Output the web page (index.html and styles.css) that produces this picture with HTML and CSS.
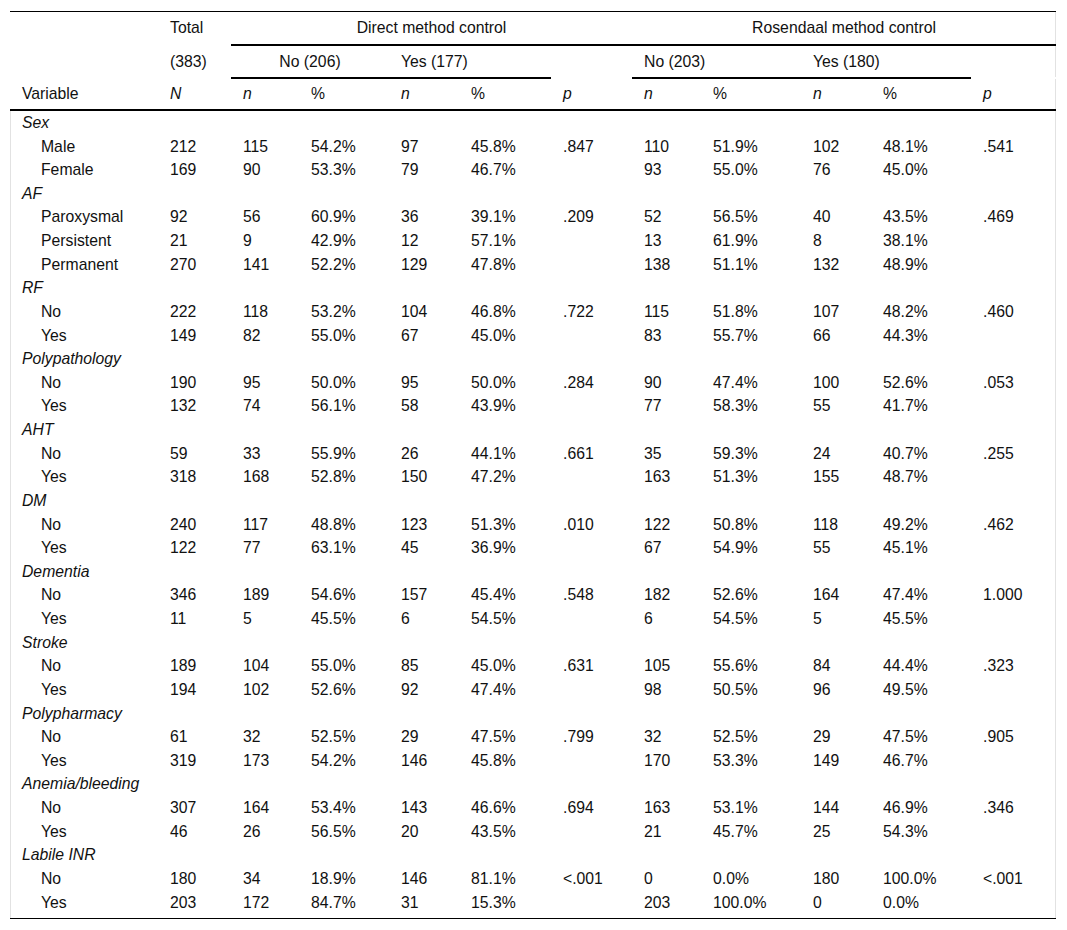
FILE: index.html
```html
<!DOCTYPE html>
<html lang="en">
<head>
<meta charset="utf-8">
<title>Table</title>
<link rel="stylesheet" href="styles.css">
</head>
<body>
<div class="wrap">
<table class="data">
<colgroup>
<col style="width:148px"><col style="width:73px"><col style="width:68px"><col style="width:90px"><col style="width:70px"><col style="width:92px"><col style="width:81px"><col style="width:69px"><col style="width:100px"><col style="width:70px"><col style="width:100px"><col style="width:85px">
</colgroup>
<thead>
<tr class="h1">
<th></th><th>Total</th><th colspan="5" class="center rule">Direct method control</th><th colspan="5" class="center rule last">Rosendaal method control</th>
</tr>
<tr class="h2">
<th></th><th>(383)</th><th colspan="2" class="center rule">No (206)</th><th colspan="2" class="rule">Yes (177)</th><th></th><th colspan="2" class="rule">No (203)</th><th colspan="2" class="rule">Yes (180)</th><th class="last"></th>
</tr>
<tr class="h3">
<th>Variable</th><th><i>N</i></th><th><i>n</i></th><th>%</th><th><i>n</i></th><th>%</th><th><i>p</i></th><th><i>n</i></th><th>%</th><th><i>n</i></th><th>%</th><th class="last"><i>p</i></th>
</tr>
</thead>
<tbody>
<tr class="grp"><td colspan="12">Sex</td></tr>
<tr><td class="sub">Male</td><td>212</td><td>115</td><td>54.2%</td><td>97</td><td>45.8%</td><td>.847</td><td>110</td><td>51.9%</td><td>102</td><td>48.1%</td><td class="last">.541</td></tr>
<tr><td class="sub">Female</td><td>169</td><td>90</td><td>53.3%</td><td>79</td><td>46.7%</td><td></td><td>93</td><td>55.0%</td><td>76</td><td>45.0%</td><td class="last"></td></tr>
<tr class="grp"><td colspan="12">AF</td></tr>
<tr><td class="sub">Paroxysmal</td><td>92</td><td>56</td><td>60.9%</td><td>36</td><td>39.1%</td><td>.209</td><td>52</td><td>56.5%</td><td>40</td><td>43.5%</td><td class="last">.469</td></tr>
<tr><td class="sub">Persistent</td><td>21</td><td>9</td><td>42.9%</td><td>12</td><td>57.1%</td><td></td><td>13</td><td>61.9%</td><td>8</td><td>38.1%</td><td class="last"></td></tr>
<tr><td class="sub">Permanent</td><td>270</td><td>141</td><td>52.2%</td><td>129</td><td>47.8%</td><td></td><td>138</td><td>51.1%</td><td>132</td><td>48.9%</td><td class="last"></td></tr>
<tr class="grp"><td colspan="12">RF</td></tr>
<tr><td class="sub">No</td><td>222</td><td>118</td><td>53.2%</td><td>104</td><td>46.8%</td><td>.722</td><td>115</td><td>51.8%</td><td>107</td><td>48.2%</td><td class="last">.460</td></tr>
<tr><td class="sub">Yes</td><td>149</td><td>82</td><td>55.0%</td><td>67</td><td>45.0%</td><td></td><td>83</td><td>55.7%</td><td>66</td><td>44.3%</td><td class="last"></td></tr>
<tr class="grp"><td colspan="12">Polypathology</td></tr>
<tr><td class="sub">No</td><td>190</td><td>95</td><td>50.0%</td><td>95</td><td>50.0%</td><td>.284</td><td>90</td><td>47.4%</td><td>100</td><td>52.6%</td><td class="last">.053</td></tr>
<tr><td class="sub">Yes</td><td>132</td><td>74</td><td>56.1%</td><td>58</td><td>43.9%</td><td></td><td>77</td><td>58.3%</td><td>55</td><td>41.7%</td><td class="last"></td></tr>
<tr class="grp"><td colspan="12">AHT</td></tr>
<tr><td class="sub">No</td><td>59</td><td>33</td><td>55.9%</td><td>26</td><td>44.1%</td><td>.661</td><td>35</td><td>59.3%</td><td>24</td><td>40.7%</td><td class="last">.255</td></tr>
<tr><td class="sub">Yes</td><td>318</td><td>168</td><td>52.8%</td><td>150</td><td>47.2%</td><td></td><td>163</td><td>51.3%</td><td>155</td><td>48.7%</td><td class="last"></td></tr>
<tr class="grp"><td colspan="12">DM</td></tr>
<tr><td class="sub">No</td><td>240</td><td>117</td><td>48.8%</td><td>123</td><td>51.3%</td><td>.010</td><td>122</td><td>50.8%</td><td>118</td><td>49.2%</td><td class="last">.462</td></tr>
<tr><td class="sub">Yes</td><td>122</td><td>77</td><td>63.1%</td><td>45</td><td>36.9%</td><td></td><td>67</td><td>54.9%</td><td>55</td><td>45.1%</td><td class="last"></td></tr>
<tr class="grp"><td colspan="12">Dementia</td></tr>
<tr><td class="sub">No</td><td>346</td><td>189</td><td>54.6%</td><td>157</td><td>45.4%</td><td>.548</td><td>182</td><td>52.6%</td><td>164</td><td>47.4%</td><td class="last">1.000</td></tr>
<tr><td class="sub">Yes</td><td>11</td><td>5</td><td>45.5%</td><td>6</td><td>54.5%</td><td></td><td>6</td><td>54.5%</td><td>5</td><td>45.5%</td><td class="last"></td></tr>
<tr class="grp"><td colspan="12">Stroke</td></tr>
<tr><td class="sub">No</td><td>189</td><td>104</td><td>55.0%</td><td>85</td><td>45.0%</td><td>.631</td><td>105</td><td>55.6%</td><td>84</td><td>44.4%</td><td class="last">.323</td></tr>
<tr><td class="sub">Yes</td><td>194</td><td>102</td><td>52.6%</td><td>92</td><td>47.4%</td><td></td><td>98</td><td>50.5%</td><td>96</td><td>49.5%</td><td class="last"></td></tr>
<tr class="grp"><td colspan="12">Polypharmacy</td></tr>
<tr><td class="sub">No</td><td>61</td><td>32</td><td>52.5%</td><td>29</td><td>47.5%</td><td>.799</td><td>32</td><td>52.5%</td><td>29</td><td>47.5%</td><td class="last">.905</td></tr>
<tr><td class="sub">Yes</td><td>319</td><td>173</td><td>54.2%</td><td>146</td><td>45.8%</td><td></td><td>170</td><td>53.3%</td><td>149</td><td>46.7%</td><td class="last"></td></tr>
<tr class="grp"><td colspan="12">Anemia/bleeding</td></tr>
<tr><td class="sub">No</td><td>307</td><td>164</td><td>53.4%</td><td>143</td><td>46.6%</td><td>.694</td><td>163</td><td>53.1%</td><td>144</td><td>46.9%</td><td class="last">.346</td></tr>
<tr><td class="sub">Yes</td><td>46</td><td>26</td><td>56.5%</td><td>20</td><td>43.5%</td><td></td><td>21</td><td>45.7%</td><td>25</td><td>54.3%</td><td class="last"></td></tr>
<tr class="grp"><td colspan="12">Labile INR</td></tr>
<tr><td class="sub">No</td><td>180</td><td>34</td><td>18.9%</td><td>146</td><td>81.1%</td><td>&lt;.001</td><td>0</td><td>0.0%</td><td>180</td><td>100.0%</td><td class="last">&lt;.001</td></tr>
<tr class="end"><td class="sub">Yes</td><td>203</td><td>172</td><td>84.7%</td><td>31</td><td>15.3%</td><td></td><td>203</td><td>100.0%</td><td>0</td><td>0.0%</td><td class="last"></td></tr>
</tbody>
</table>
</div>
</body>
</html>
```
FILE: styles.css
```css
html, body {
  margin: 0;
  padding: 0;
  background: #ffffff;
}

body {
  font-family: "Liberation Sans", Arial, sans-serif;
  font-size: 15.75px;
  color: #111111;
}

.wrap {
  padding: 11px 11px 0 10px;
}

.data {
  width: 1046px;
  table-layout: fixed;
  border-collapse: separate;
  border-spacing: 0;
}

.data th,
.data td {
  padding: 0 12px;
  text-align: left;
  font-weight: normal;
  line-height: 23.62px;
  white-space: nowrap;
  vertical-align: middle;
}

.data i {
  font-style: italic;
}

.data thead th {
  border-bottom: 2px solid transparent;
}

.data th.center {
  text-align: center;
}

.data th.rule {
  border-bottom-color: #000000;
}

.h1 th {
  border-top: 1px solid #000000;
  padding-top: 4px;
  padding-bottom: 4px;
}

.h2 th {
  padding-top: 4px;
  padding-bottom: 4px;
}

.h3 th {
  padding-top: 3px;
  padding-bottom: 3px;
  border-bottom-color: #000000 !important;
}

.data th.last,
.data td.last {
  box-shadow: inset -1px 0 0 #e2e2e2;
}

.data tbody td:first-child {
  box-shadow: inset 1px 0 0 #e2e2e2;
}

.data tbody tr.grp td {
  font-style: italic;
  box-shadow: inset 1px 0 0 #e2e2e2, inset -1px 0 0 #e2e2e2;
}

.data td.sub {
  padding-left: 31px;
}

.data tr.end td {
  padding-bottom: 4px;
  border-bottom: 1px solid #000000;
}
```
